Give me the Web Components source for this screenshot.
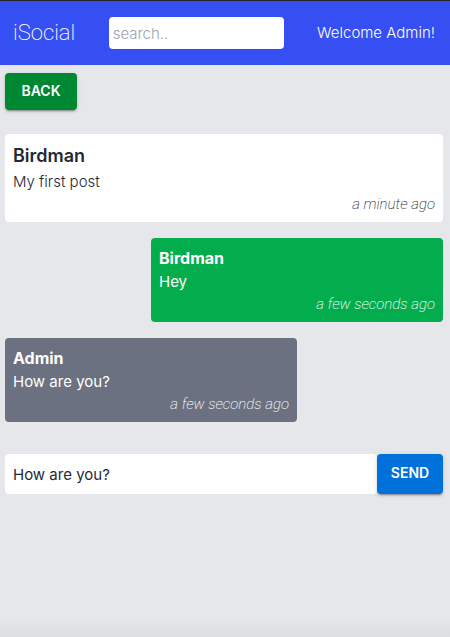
<!DOCTYPE html>
<html lang="en">
<head>
<meta charset="utf-8">
<meta name="viewport" content="width=device-width, initial-scale=1">
<title>iSocial</title>
<style>
html { min-height: 100%; background: #e5e7eb; }
body { margin: 0; min-height: 100vh; font-family: Inter, "Liberation Sans", sans-serif; font-size: 15px; line-height: 24px; color: #1f2937; background: linear-gradient(to top, #dddee2, #e5e7eb 20px); }
</style>
</head>
<body>
<social-app></social-app>
<script>
const define = (name, markup) => {
  const template = document.createElement('template');
  template.innerHTML = '<style>*{box-sizing:border-box}</style>' + markup;
  customElements.define(name, class extends HTMLElement {
    constructor() {
      super();
      this.attachShadow({ mode: 'open' }).append(template.content.cloneNode(true));
    }
  });
};

define('social-header', `
<style>
:host { display: block; background: #364ff2; border-top: 1px solid #24262e; color: #fff; font-weight: 300; }
header { display: flex; align-items: center; justify-content: space-between; padding: 16px 15px 16px 13px; }
a { color: inherit; text-decoration: none; font-family: Roboto, sans-serif; font-size: 22px; line-height: 32px; font-weight: 200; }
input { width: 175px; height: 32px; padding: 4px; border: 0; border-radius: 4px; background: #fff; font: inherit; font-weight: 300; color: #1f2937; }
input::placeholder { color: #9ca3af; opacity: 1; }
</style>
<header>
  <a href="#">iSocial</a>
  <input type="search" placeholder="search.." aria-label="Search">
  <span><slot></slot></span>
</header>`);

define('action-button', `
<style>
:host { display: inline-flex; }
button { min-width: 72px; padding: 6px 16px 7px; border: 0; border-radius: 4px; background: var(--button-color, #008732); color: #fff; font: 600 14px/24px Inter, "Liberation Sans", sans-serif; text-transform: uppercase; cursor: pointer;
  box-shadow: 0 3px 1px -2px rgba(0,0,0,.2), 0 2px 2px 0 rgba(0,0,0,.14), 0 1px 5px 0 rgba(0,0,0,.12); }
:host([compact]) button { min-width: 66px; padding: 6px 13px 8px; }
</style>
<button type="button"><slot></slot></button>`);

define('post-card', `
<style>
:host { display: block; padding: 8px; border-radius: 4px; background: #fff; font-weight: 300; }
h2 { margin: 0; font-size: 18px; line-height: 28px; font-weight: 600; }
p { margin: 0; }
.time { font-family: Roboto, sans-serif; font-size: 15px; line-height: 20px; font-style: italic; font-weight: 200; text-align: right; }
</style>
<article>
  <h2><slot name="author"></slot></h2>
  <p><slot></slot></p>
  <p class="time"><slot name="time"></slot></p>
</article>`);

define('chat-message', `
<style>
:host { display: block; width: 66.6667%; padding: 8px; border-radius: 4px; background: #6b7180; color: #fff; }
:host([reply]) { align-self: flex-end; background: #03ad4e; }
h3 { margin: 0; font-size: 16px; line-height: 24px; font-weight: 700; }
p { margin: 0; }
.time { font-family: Roboto, sans-serif; font-size: 15px; line-height: 20px; font-style: italic; font-weight: 200; text-align: right; }
</style>
<article>
  <h3><slot name="author"></slot></h3>
  <p><slot></slot></p>
  <p class="time"><slot name="time"></slot></p>
</article>`);

define('message-composer', `
<style>
:host { display: block; }
form { display: flex; }
input { flex: 1; min-width: 0; height: 40px; padding: 8px; border: 0; border-radius: 4px; background: #fff; font: inherit; color: inherit; }
action-button { --button-color: #0070da; }
</style>
<form>
  <input type="text" value="How are you?" aria-label="Message">
  <action-button compact>Send</action-button>
</form>`);

define('social-app', `
<style>
:host { display: block; }
main { display: flex; flex-direction: column; padding: 8px 7px 32px 5px; }
.back { align-self: flex-start; margin-bottom: 24px; }
.thread { display: flex; flex-direction: column; gap: 16px; margin-bottom: 32px; }
</style>
<social-header>Welcome Admin!</social-header>
<main>
  <action-button class="back">Back</action-button>
  <div class="thread">
    <post-card><span slot="author">Birdman</span>My first post<span slot="time">a minute ago</span></post-card>
    <chat-message reply><span slot="author">Birdman</span>Hey<span slot="time">a few seconds ago</span></chat-message>
    <chat-message><span slot="author">Admin</span>How are you?<span slot="time">a few seconds ago</span></chat-message>
  </div>
  <message-composer></message-composer>
</main>`);
</script>
</body>
</html>
